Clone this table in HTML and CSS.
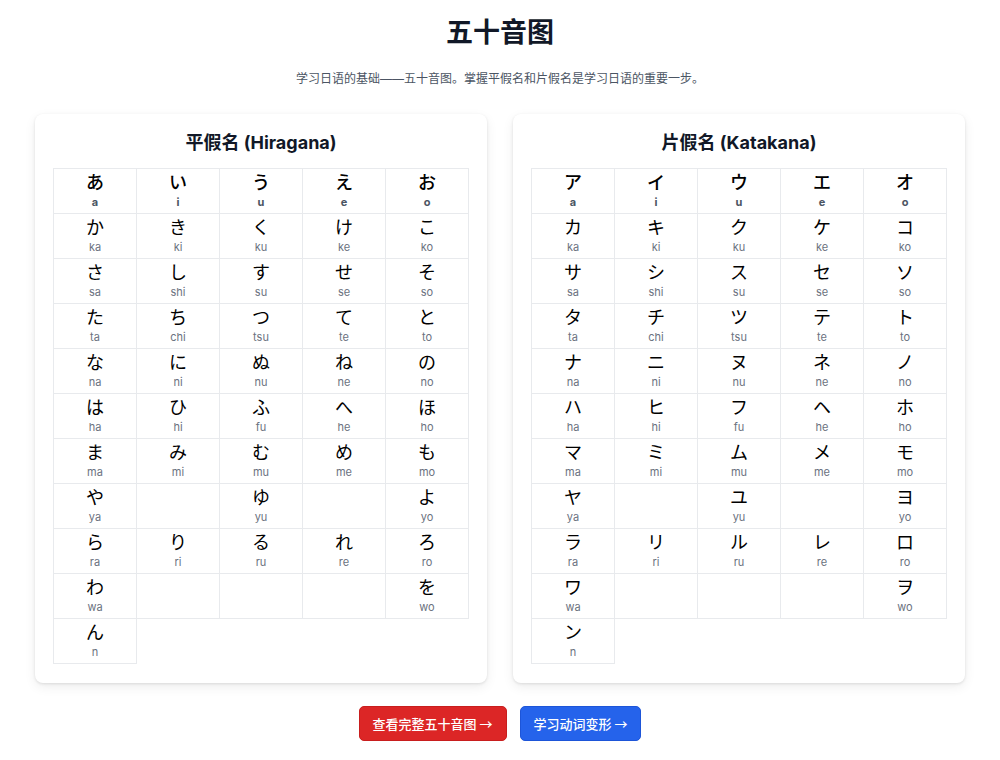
FILE: index.html
```html
<!DOCTYPE html>
<html lang="zh-CN">
<head>
<meta charset="utf-8">
<title>五十音图</title>
<link rel="stylesheet" href="styles.css">
</head>
<body>
<main class="page">
  <h1 class="title">五十音图</h1>
  <p class="subtitle">学习日语的基础——五十音图。掌握平假名和片假名是学习日语的重要一步。</p>
  <div class="cards">
    <section class="card">
      <h2 class="card-title">平假名 (Hiragana)</h2>
      <table class="kana">
        <tr class="head"><th><span class="k">あ</span><span class="r">a</span></th><th><span class="k">い</span><span class="r">i</span></th><th><span class="k">う</span><span class="r">u</span></th><th><span class="k">え</span><span class="r">e</span></th><th><span class="k">お</span><span class="r">o</span></th></tr>
        <tr><td><span class="k">か</span><span class="r">ka</span></td><td><span class="k">き</span><span class="r">ki</span></td><td><span class="k">く</span><span class="r">ku</span></td><td><span class="k">け</span><span class="r">ke</span></td><td><span class="k">こ</span><span class="r">ko</span></td></tr>
        <tr><td><span class="k">さ</span><span class="r">sa</span></td><td><span class="k">し</span><span class="r">shi</span></td><td><span class="k">す</span><span class="r">su</span></td><td><span class="k">せ</span><span class="r">se</span></td><td><span class="k">そ</span><span class="r">so</span></td></tr>
        <tr><td><span class="k">た</span><span class="r">ta</span></td><td><span class="k">ち</span><span class="r">chi</span></td><td><span class="k">つ</span><span class="r">tsu</span></td><td><span class="k">て</span><span class="r">te</span></td><td><span class="k">と</span><span class="r">to</span></td></tr>
        <tr><td><span class="k">な</span><span class="r">na</span></td><td><span class="k">に</span><span class="r">ni</span></td><td><span class="k">ぬ</span><span class="r">nu</span></td><td><span class="k">ね</span><span class="r">ne</span></td><td><span class="k">の</span><span class="r">no</span></td></tr>
        <tr><td><span class="k">は</span><span class="r">ha</span></td><td><span class="k">ひ</span><span class="r">hi</span></td><td><span class="k">ふ</span><span class="r">fu</span></td><td><span class="k">へ</span><span class="r">he</span></td><td><span class="k">ほ</span><span class="r">ho</span></td></tr>
        <tr><td><span class="k">ま</span><span class="r">ma</span></td><td><span class="k">み</span><span class="r">mi</span></td><td><span class="k">む</span><span class="r">mu</span></td><td><span class="k">め</span><span class="r">me</span></td><td><span class="k">も</span><span class="r">mo</span></td></tr>
        <tr><td><span class="k">や</span><span class="r">ya</span></td><td></td><td><span class="k">ゆ</span><span class="r">yu</span></td><td></td><td><span class="k">よ</span><span class="r">yo</span></td></tr>
        <tr><td><span class="k">ら</span><span class="r">ra</span></td><td><span class="k">り</span><span class="r">ri</span></td><td><span class="k">る</span><span class="r">ru</span></td><td><span class="k">れ</span><span class="r">re</span></td><td><span class="k">ろ</span><span class="r">ro</span></td></tr>
        <tr><td><span class="k">わ</span><span class="r">wa</span></td><td></td><td></td><td></td><td><span class="k">を</span><span class="r">wo</span></td></tr>
        <tr><td><span class="k">ん</span><span class="r">n</span></td></tr>
      </table>
    </section>
    <section class="card">
      <h2 class="card-title">片假名 (Katakana)</h2>
      <table class="kana">
        <tr class="head"><th><span class="k">ア</span><span class="r">a</span></th><th><span class="k">イ</span><span class="r">i</span></th><th><span class="k">ウ</span><span class="r">u</span></th><th><span class="k">エ</span><span class="r">e</span></th><th><span class="k">オ</span><span class="r">o</span></th></tr>
        <tr><td><span class="k">カ</span><span class="r">ka</span></td><td><span class="k">キ</span><span class="r">ki</span></td><td><span class="k">ク</span><span class="r">ku</span></td><td><span class="k">ケ</span><span class="r">ke</span></td><td><span class="k">コ</span><span class="r">ko</span></td></tr>
        <tr><td><span class="k">サ</span><span class="r">sa</span></td><td><span class="k">シ</span><span class="r">shi</span></td><td><span class="k">ス</span><span class="r">su</span></td><td><span class="k">セ</span><span class="r">se</span></td><td><span class="k">ソ</span><span class="r">so</span></td></tr>
        <tr><td><span class="k">タ</span><span class="r">ta</span></td><td><span class="k">チ</span><span class="r">chi</span></td><td><span class="k">ツ</span><span class="r">tsu</span></td><td><span class="k">テ</span><span class="r">te</span></td><td><span class="k">ト</span><span class="r">to</span></td></tr>
        <tr><td><span class="k">ナ</span><span class="r">na</span></td><td><span class="k">ニ</span><span class="r">ni</span></td><td><span class="k">ヌ</span><span class="r">nu</span></td><td><span class="k">ネ</span><span class="r">ne</span></td><td><span class="k">ノ</span><span class="r">no</span></td></tr>
        <tr><td><span class="k">ハ</span><span class="r">ha</span></td><td><span class="k">ヒ</span><span class="r">hi</span></td><td><span class="k">フ</span><span class="r">fu</span></td><td><span class="k">ヘ</span><span class="r">he</span></td><td><span class="k">ホ</span><span class="r">ho</span></td></tr>
        <tr><td><span class="k">マ</span><span class="r">ma</span></td><td><span class="k">ミ</span><span class="r">mi</span></td><td><span class="k">ム</span><span class="r">mu</span></td><td><span class="k">メ</span><span class="r">me</span></td><td><span class="k">モ</span><span class="r">mo</span></td></tr>
        <tr><td><span class="k">ヤ</span><span class="r">ya</span></td><td></td><td><span class="k">ユ</span><span class="r">yu</span></td><td></td><td><span class="k">ヨ</span><span class="r">yo</span></td></tr>
        <tr><td><span class="k">ラ</span><span class="r">ra</span></td><td><span class="k">リ</span><span class="r">ri</span></td><td><span class="k">ル</span><span class="r">ru</span></td><td><span class="k">レ</span><span class="r">re</span></td><td><span class="k">ロ</span><span class="r">ro</span></td></tr>
        <tr><td><span class="k">ワ</span><span class="r">wa</span></td><td></td><td></td><td></td><td><span class="k">ヲ</span><span class="r">wo</span></td></tr>
        <tr><td><span class="k">ン</span><span class="r">n</span></td></tr>
      </table>
    </section>
  </div>
  <div class="actions">
    <a class="btn btn-red" href="#">查看完整五十音图 →</a>
    <a class="btn btn-blue" href="#">学习动词变形 →</a>
  </div>
</main>
</body>
</html>
```

FILE: styles.css
```css
* { box-sizing: border-box; }
html, body { margin: 0; padding: 0; background: #ffffff; }
body {
  font-family: Inter, "Noto Sans CJK SC", "Noto Sans", sans-serif;
  color: #111827;
}
.page {
  width: 930px;
  margin: 0 auto;
  padding-top: 16px;
}
.title {
  margin: 0;
  text-align: center;
  font-size: 27px;
  line-height: 34px;
  font-weight: 700;
  color: #111827;
}
.subtitle {
  margin: 19px 0 0;
  text-align: center;
  font-size: 12px;
  line-height: 20px;
  color: #4b5563;
}
.cards {
  margin-top: 25px;
  display: grid;
  grid-template-columns: 1fr 1fr;
  gap: 26px;
}
.card {
  background: #fff;
  border-radius: 8px;
  box-shadow: 0 1px 3px rgba(0,0,0,0.10), 0 4px 12px rgba(0,0,0,0.07);
  padding: 17px 18px 19px;
}
.card-title {
  margin: 0 0 13px;
  text-align: center;
  font-size: 18px;
  line-height: 24px;
  font-weight: 700;
  color: #111827;
}
.kana {
  width: 100%;
  border-collapse: collapse;
  table-layout: fixed;
}
.kana td, .kana th {
  border: 1px solid #e8eaed;
  height: 45px;
  padding: 1px 0 4px;
  text-align: center;
  vertical-align: top;
  font-weight: 400;
}
.kana .k {
  display: block;
  font-family: "Noto Sans CJK JP", sans-serif;
  font-size: 18px;
  line-height: 23px;
  color: #000;
}
.kana .r {
  display: block;
  margin-top: 2px;
  font-size: 11px;
  line-height: 14px;
  color: #6b7280;
}
.kana th .k { font-weight: 500; }
.kana th .r { font-weight: 700; color: #4b5563; }
.actions {
  margin-top: 23px;
  display: flex;
  justify-content: center;
  gap: 13px;
}
.btn {
  display: inline-flex;
  align-items: center;
  height: 35px;
  padding: 0 13px;
  border-radius: 5px;
  color: #fff;
  text-decoration: none;
  font-family: "Noto Sans CJK SC", sans-serif;
  font-size: 13px;
  font-weight: 500;
}
.btn-red { background: #dc2626; border: 1px solid #c81e1e; }
.btn-blue { background: #2563eb; border: 1px solid #1d55d8; }
```
